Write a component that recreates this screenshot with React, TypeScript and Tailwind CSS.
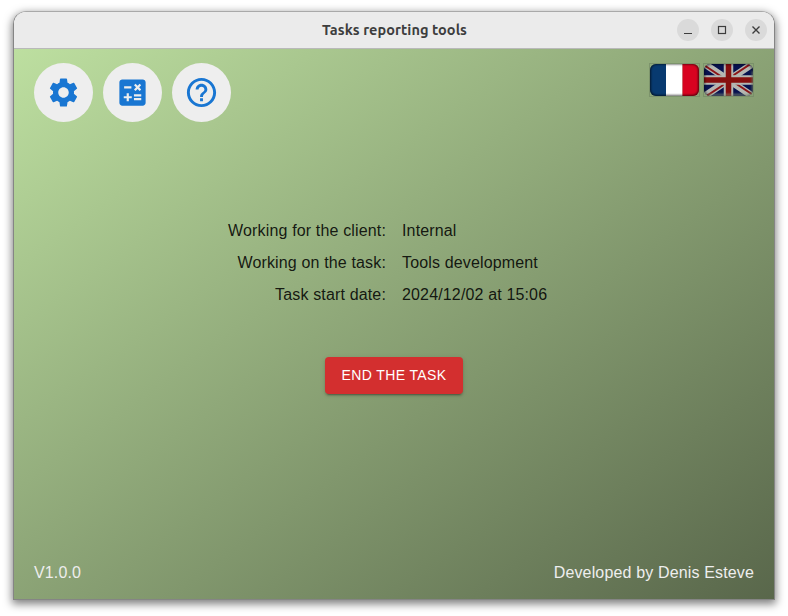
import React from 'react';
import { MdCalculate, MdHelpOutline, MdSettings } from 'react-icons/md';

function RoundButton({ label, children }: { label: string; children: React.ReactNode }) {
  return (
    <button aria-label={label} className="flex size-[59px] items-center justify-center rounded-full bg-[#eeeeee] text-[#1976d2]">
      {children}
    </button>
  );
}

function WindowButton({ label, children }: { label: string; children: React.ReactNode }) {
  return (
    <button aria-label={label} className="flex size-[22px] items-center justify-center rounded-full bg-[#dadada]">
      <svg width="22" height="22" viewBox="0 0 22 22" fill="none" stroke="#3d3d3d" strokeWidth="1.2">
        {children}
      </svg>
    </button>
  );
}

function FrenchFlag() {
  return (
    <svg width="51" height="34" viewBox="0 0 51 34" aria-label="Français">
      <defs>
        <clipPath id="frClip"><rect x="1" y="1" width="49" height="32" rx="6" /></clipPath>
        <filter id="soft" x="-20%" y="-20%" width="140%" height="140%"><feGaussianBlur stdDeviation="1" /></filter>
      </defs>
      <rect x="0.5" y="0.5" width="50" height="33" fill="none" stroke="#708562" strokeOpacity="0.6" />
      <g clipPath="url(#frClip)">
        <rect width="17" height="34" fill="#083a70" />
        <rect x="17" width="16.5" height="34" fill="#fff" />
        <rect x="33.5" width="18" height="34" fill="#d80320" />
        <rect x="0.5" y="0" width="50" height="33.5" rx="7" fill="none" stroke="#000" strokeWidth="2.4" strokeOpacity="0.75" filter="url(#soft)" />
      </g>
    </svg>
  );
}

function BritishFlag() {
  return (
    <svg width="51" height="34" viewBox="0 0 51 34" aria-label="English">
      <defs>
        <clipPath id="ukClip"><rect x="1" y="1" width="49" height="32" rx="6" /></clipPath>
      </defs>
      <rect x="0.5" y="0.5" width="50" height="33" fill="none" stroke="#708562" strokeOpacity="0.6" />
      <g clipPath="url(#ukClip)">
        <rect width="51" height="34" fill="#07124f" />
        <path d="M0 0L51 34M51 0L0 34" stroke="#b4b7b2" strokeWidth="7" />
        <path d="M0 1.5L22 16M51 32.5L29 18M49 0L27 14.5M2 34L24 19.5" stroke="#8c1518" strokeWidth="2" />
        <path d="M25.5 0V34M0 17H51" stroke="#b4b7b2" strokeWidth="9.5" />
        <path d="M25.5 0V34M0 17H51" stroke="#860f0e" strokeWidth="5.5" />
        <rect x="1" y="0.5" width="49" height="33" rx="7" fill="none" stroke="#000" strokeWidth="2" strokeOpacity="0.55" filter="url(#soft)" />
        <path d="M5 32H46Q50 32 50 28V8" fill="none" stroke="#a2b18f" strokeWidth="2" strokeOpacity="0.6" filter="url(#soft)" />
      </g>
    </svg>
  );
}

const rows = [
  ['Working for the client:', 'Internal'],
  ['Working on the task:', 'Tools development'],
  ['Task start date:', '2024/12/02 at 15:06'],
];

export default function App() {
  return (
    <div className="h-[616px] w-[788px] bg-white pl-[13px] pt-[11px] font-['Liberation_Sans',Arial,sans-serif] text-base">
      <div className="flex h-[589px] w-[762px] flex-col overflow-hidden rounded-t-[13px] border border-[#858585] border-t-[#a9a9a9] shadow-[0_3px_9px_1px_rgba(0,0,0,0.5)]">
        <header className="grid h-[37px] shrink-0 grid-cols-[1fr_auto_1fr] items-center border-b border-[#b9b9b9] bg-[#ebebeb] pr-[7px]">
          <span />
          <h1 className="whitespace-nowrap pl-[8px] text-center font-['Ubuntu','Noto_Sans',sans-serif] text-[14.5px] leading-5 font-semibold tracking-[0.05px] text-[#3d3d3d]">
            Tasks reporting tools
          </h1>
          <div className="flex justify-end gap-3">
            <WindowButton label="Minimize"><path d="M7 14.5H15" /></WindowButton>
            <WindowButton label="Maximize"><rect x="7.5" y="7.5" width="7" height="7" /></WindowButton>
            <WindowButton label="Close"><path d="M7.5 7.5L14.5 14.5M14.5 7.5L7.5 14.5" strokeWidth="1.4" /></WindowButton>
          </div>
        </header>
        <main className="flex min-h-0 flex-1 flex-col bg-[linear-gradient(to_bottom_right,#bddfa0_0%,#59674b_100%)] px-5 pt-[14px] tracking-[0.15px]">
          <div className="flex h-[59px] items-start justify-between">
            <nav className="flex gap-[10px]">
              <RoundButton label="Settings"><MdSettings size={35} /></RoundButton>
              <RoundButton label="Calculate"><MdCalculate size={35} /></RoundButton>
              <RoundButton label="Help"><MdHelpOutline size={35} /></RoundButton>
            </nav>
            <div className="flex gap-[3px]">
              <FrenchFlag />
              <BritishFlag />
            </div>
          </div>
          <dl className="mt-[97px] grid grid-cols-[352px_1fr] gap-x-4 gap-y-2 leading-6 text-black/87">
            {rows.map(([label, value]) => (
              <React.Fragment key={label}>
                <dt className="text-right">{label}</dt>
                <dd>{value}</dd>
              </React.Fragment>
            ))}
          </dl>
          <button className="mt-[50px] h-[36.5px] w-[138px] self-center rounded bg-[#d32f2f] text-sm leading-[24.5px] tracking-[0.4px] text-white shadow-[0_3px_1px_-2px_rgba(0,0,0,0.2),0_2px_2px_0_rgba(0,0,0,0.14),0_1px_5px_0_rgba(0,0,0,0.12)]">
            END THE TASK
          </button>
          <footer className="mt-auto mb-[14px] flex justify-between leading-6 text-[#eeeeee]">
            <span>V1.0.0</span>
            <span>Developed by Denis Esteve</span>
          </footer>
        </main>
      </div>
    </div>
  );
}
